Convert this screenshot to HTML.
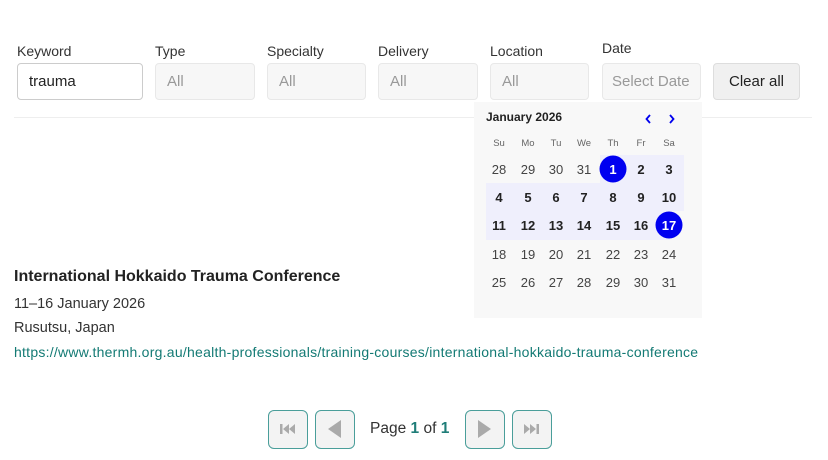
<!DOCTYPE html>
<html><head><meta charset="utf-8"><style>
*{box-sizing:border-box;margin:0;padding:0}
body{width:828px;height:460px;background:#fff;position:relative;overflow:hidden;font-family:"Liberation Sans",sans-serif;color:#222}
.a{position:absolute}
.lbl{position:absolute;font-size:14px;color:#333;top:43px}
.in{position:absolute;top:63px;height:37px;border:1px solid #e8e8e8;border-radius:4px;background:#f7f7f7;color:#999;font-size:15px;line-height:35px;padding-left:11px}
.cal{position:absolute;left:474px;top:102px;width:228px;height:216px;background:#f8f8f8}
.d{position:absolute;width:28px;text-align:center;font-size:12px;color:#444;transform:translate(-14px,-8px);line-height:16px}
.b{font-weight:bold;color:#222}
.h{position:absolute;background:#efeffc}
.c{position:absolute;width:27px;height:27px;border-radius:50%;background:#0000f0;transform:translate(-13.5px,-13.5px)}
.pb{position:absolute;top:410px;width:40px;height:39px;border:1.5px solid #4a9e9a;border-radius:6px;background:#f3f3f3}
</style></head><body>
<div class="lbl" style="left:17px">Keyword</div>
<div class="lbl" style="left:155px">Type</div>
<div class="lbl" style="left:267px">Specialty</div>
<div class="lbl" style="left:378px">Delivery</div>
<div class="lbl" style="left:490px">Location</div>
<div class="lbl" style="left:602px;top:40px">Date</div>
<div class="in" style="left:17px;width:126px;background:#fff;border-color:#ccc;color:#222">trauma</div>
<div class="in" style="left:155px;width:100px">All</div>
<div class="in" style="left:267px;width:99px">All</div>
<div class="in" style="left:378px;width:100px">All</div>
<div class="in" style="left:490px;width:99px">All</div>
<div class="in" style="left:602px;width:99px;font-size:15px;padding-left:9px;white-space:nowrap">Select Date</div>
<div class="in" style="left:713px;width:87px;background:#f0f0f0;border-color:#ddd;color:#222;padding-left:0;text-align:center">Clear all</div>
<div class="a" style="left:14px;top:117px;width:798px;height:1px;background:#eee"></div>

<div class="cal">
<div class="a" style="left:12px;top:8px;font-size:12px;font-weight:bold;color:#222">January 2026</div>
<svg class="a" style="left:168px;top:10px" width="36" height="14"><path d="M8 3 L4.5 7 L8 11" stroke="#0000ee" stroke-width="1.8" fill="none"/><path d="M28 3 L31.5 7 L28 11" stroke="#0000ee" stroke-width="1.8" fill="none"/></svg>
<div class="h" style="left:126px;top:53px;width:84px;height:28px"></div>
<div class="h" style="left:12px;top:81px;width:198px;height:28px"></div>
<div class="h" style="left:12px;top:109px;width:184px;height:29px"></div>
<div class="c" style="left:139px;top:67px"></div>
<div class="c" style="left:195px;top:123px"></div>
</div>
<div id="g"></div>
<script>
var xs=[499,528,556,584,613,641,669],ys=[169,197,225,254,282],h=["Su","Mo","Tu","We","Th","Fr","Sa"],s="";
h.forEach(function(t,i){s+='<div class="d" style="left:'+xs[i]+'px;top:144px;font-size:9.5px;color:#666">'+t+'</div>'});
var days=[28,29,30,31,1,2,3,4,5,6,7,8,9,10,11,12,13,14,15,16,17,18,19,20,21,22,23,24,25,26,27,28,29,30,31];
days.forEach(function(d,k){var r=Math.floor(k/7),c=k%7,cls="d";var st="";
if(k>=4&&k<=20)cls+=" b";if(k==4||k==20)st="color:#fff;";
s+='<div class="'+cls+'" style="'+st+'left:'+xs[c]+'px;top:'+(ys[r]+1)+'px;font-size:13px">'+d+'</div>'});
document.getElementById("g").innerHTML=s;
</script>

<div class="a" style="left:14px;top:268px;font-size:16px;font-weight:bold;color:#222">International Hokkaido Trauma Conference</div>
<div class="a" style="left:14px;top:296px;font-size:14.5px;color:#333">11–16 January 2026</div>
<div class="a" style="left:14px;top:320px;font-size:14.5px;color:#333">Rusutsu, Japan</div>
<div class="a" style="left:14px;top:344px;font-size:14px;color:#137a74;letter-spacing:0.25px">https://www.thermh.org.au/health-professionals/training-courses/international-hokkaido-trauma-conference</div>

<div class="pb" style="left:268px"><svg width="37" height="36"><path d="M11 13h2.5v10H11z M20 13v10l-6-5z M26 13v10l-6-5z" fill="#aaa"/></svg></div>
<div class="pb" style="left:315px"><svg width="37" height="36"><path d="M25 9v18L12 18z" fill="#aaa"/></svg></div>
<div class="a" style="left:370px;top:420px;font-size:15.5px;color:#333">Page <b style="color:#1f7d78">1</b> of <b style="color:#1f7d78">1</b></div>
<div class="pb" style="left:465px"><svg width="37" height="36"><path d="M12 9v18l13-9z" fill="#aaa"/></svg></div>
<div class="pb" style="left:512px"><svg width="37" height="36"><path d="M11 13v10l6-5z M17 13v10l6-5z M23.5 13H26v10h-2.5z" fill="#aaa"/></svg></div>
</body></html>
